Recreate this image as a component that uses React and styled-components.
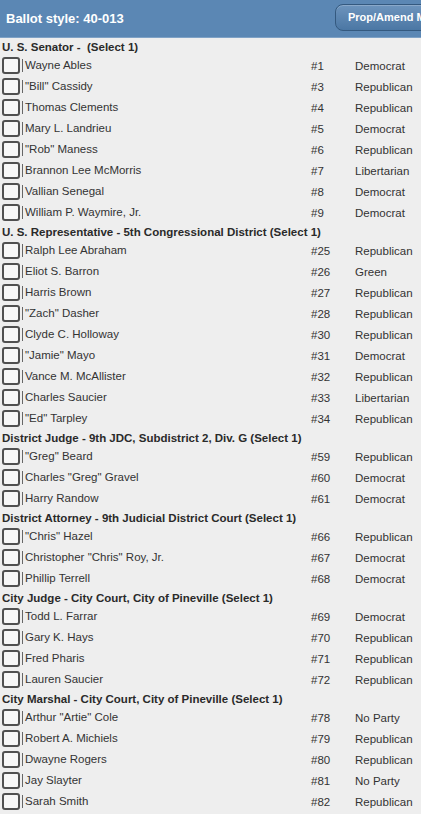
import React from 'react';
import styled, { createGlobalStyle } from 'styled-components';

const GlobalStyle = createGlobalStyle`
  body {
    margin: 0;
    background-color: #eeeeee;
    font-family: "Liberation Sans", Arial, sans-serif;
    overflow: hidden;
  }
`

const Page = styled.div`
  width: 421px;
  height: 814px;
  overflow: hidden;
  background-color: #eeeeee;
`

const Header = styled.div`
  display: flex;
  flex-direction: row;
  align-items: center;
  height: 37px;
  padding-left: 6px;
  background-color: #5b87b4;
  border-bottom: 1px solid #7fa2c6;
  overflow: hidden;
  white-space: nowrap;
`

const Title = styled.span`
  flex: 0 0 329px;
  color: white;
  font-size: 13px;
  font-weight: bold;
`

const NavButton = styled.div`
  flex-shrink: 0;
  height: 25px;
  line-height: 25px;
  margin-top: -2px;
  padding: 0 12px;
  color: white;
  font-size: 11px;
  font-weight: bold;
  border: 1px solid #34597f;
  border-radius: 8px;
  background: linear-gradient(#6d94bd, #4b77a4);
  box-shadow: inset 0 1px 0 rgba(255, 255, 255, 0.2);
`

const Race = styled.div`
  display: flex;
  flex-direction: column;
`

const RaceTitle = styled.div`
  height: 17px;
  line-height: 19px;
  padding-left: 2px;
  color: #2a2a2a;
  font-size: 11.5px;
  font-weight: bold;
  white-space: pre;
`

const Row = styled.div`
  display: grid;
  grid-template-columns: 22px 289px 44px 1fr;
  align-items: center;
  height: 21px;
  color: #333;
  font-size: 11.5px;
  white-space: nowrap;
`

const Check = styled.span`
  margin-left: 2px;
  width: 14px;
  height: 13px;
  border: 2px solid #505050;
  border-radius: 3px;
  background-color: #f7f7f7;
`

const Name = styled.span`
  padding-left: 2px;
  border-left: 1px solid #666;
  line-height: 13px;
`

const races = [
  {
    title: 'U. S. Senator -  (Select 1)',
    candidates: [
      ['Wayne Ables', '#1', 'Democrat'],
      ['"Bill" Cassidy', '#3', 'Republican'],
      ['Thomas Clements', '#4', 'Republican'],
      ['Mary L. Landrieu', '#5', 'Democrat'],
      ['"Rob" Maness', '#6', 'Republican'],
      ['Brannon Lee McMorris', '#7', 'Libertarian'],
      ['Vallian Senegal', '#8', 'Democrat'],
      ['William P. Waymire, Jr.', '#9', 'Democrat'],
    ],
  },
  {
    title: 'U. S. Representative - 5th Congressional District (Select 1)',
    candidates: [
      ['Ralph Lee Abraham', '#25', 'Republican'],
      ['Eliot S. Barron', '#26', 'Green'],
      ['Harris Brown', '#27', 'Republican'],
      ['"Zach" Dasher', '#28', 'Republican'],
      ['Clyde C. Holloway', '#30', 'Republican'],
      ['"Jamie" Mayo', '#31', 'Democrat'],
      ['Vance M. McAllister', '#32', 'Republican'],
      ['Charles Saucier', '#33', 'Libertarian'],
      ['"Ed" Tarpley', '#34', 'Republican'],
    ],
  },
  {
    title: 'District Judge - 9th JDC, Subdistrict 2, Div. G (Select 1)',
    candidates: [
      ['"Greg" Beard', '#59', 'Republican'],
      ['Charles "Greg" Gravel', '#60', 'Democrat'],
      ['Harry Randow', '#61', 'Democrat'],
    ],
  },
  {
    title: 'District Attorney - 9th Judicial District Court (Select 1)',
    candidates: [
      ['"Chris" Hazel', '#66', 'Republican'],
      ['Christopher "Chris" Roy, Jr.', '#67', 'Democrat'],
      ['Phillip Terrell', '#68', 'Democrat'],
    ],
  },
  {
    title: 'City Judge - City Court, City of Pineville (Select 1)',
    candidates: [
      ['Todd L. Farrar', '#69', 'Democrat'],
      ['Gary K. Hays', '#70', 'Republican'],
      ['Fred Pharis', '#71', 'Republican'],
      ['Lauren Saucier', '#72', 'Republican'],
    ],
  },
  {
    title: 'City Marshal - City Court, City of Pineville (Select 1)',
    candidates: [
      ['Arthur "Artie" Cole', '#78', 'No Party'],
      ['Robert A. Michiels', '#79', 'Republican'],
      ['Dwayne Rogers', '#80', 'Republican'],
      ['Jay Slayter', '#81', 'No Party'],
      ['Sarah Smith', '#82', 'Republican'],
    ],
  },
]

export default function App() {
  return (
    <Page>
      <GlobalStyle />
      <Header>
        <Title>Ballot style: 40-013</Title>
        <NavButton>Prop/Amend Menu</NavButton>
      </Header>
      {races.map(race => (
        <Race key={race.title}>
          <RaceTitle>{race.title}</RaceTitle>
          {race.candidates.map(([name, num, party]) => (
            <Row key={name}>
              <Check />
              <Name>{name}</Name>
              <span>{num}</span>
              <span>{party}</span>
            </Row>
          ))}
        </Race>
      ))}
    </Page>
  )
}
